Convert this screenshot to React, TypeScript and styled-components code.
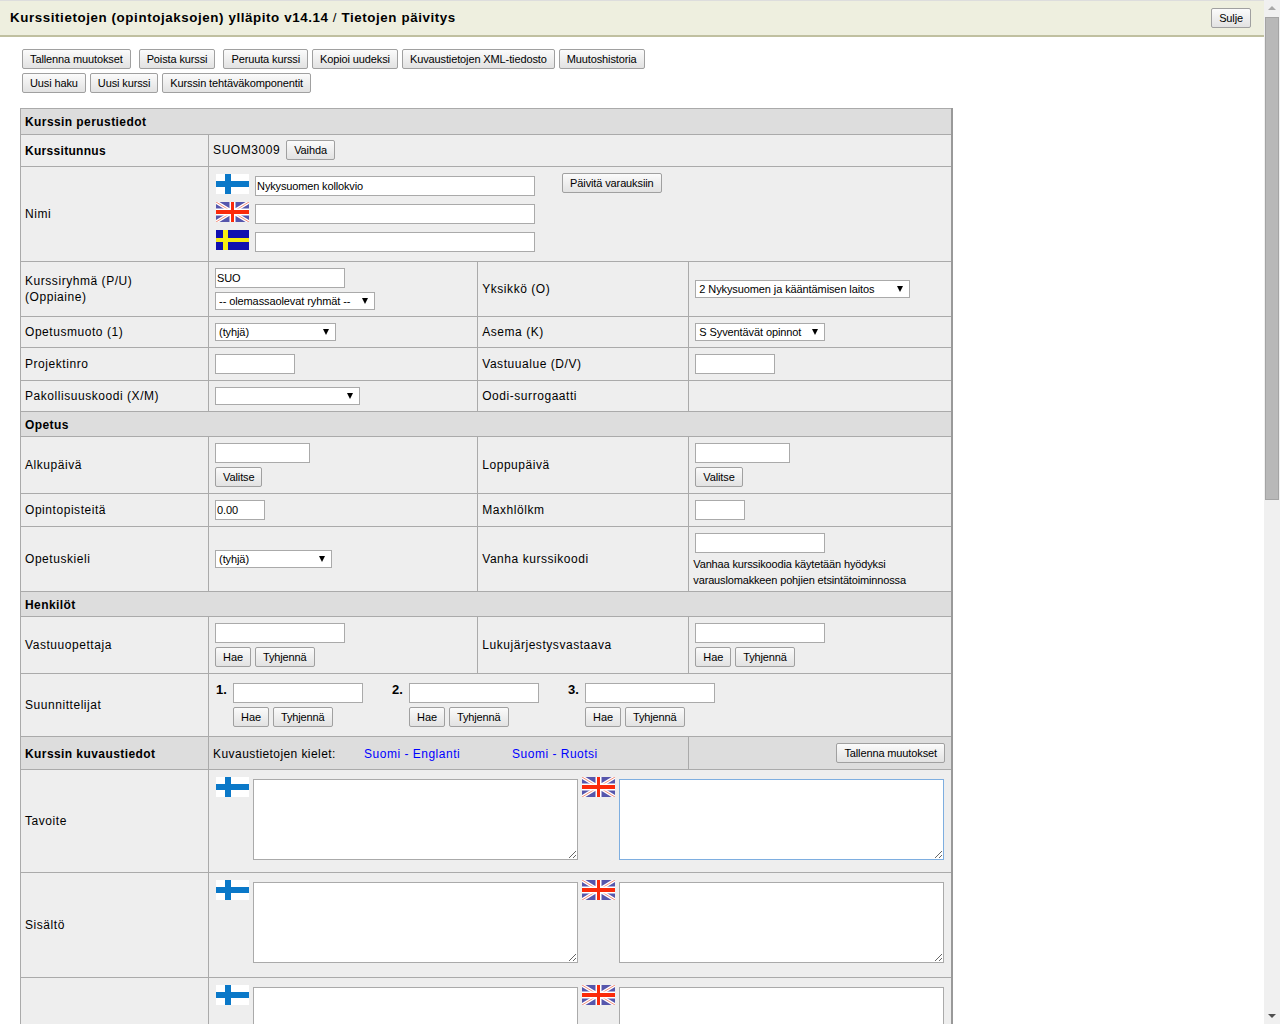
import React from "react";
import styled, { createGlobalStyle } from "styled-components";

const Global = createGlobalStyle`
    html, body {
        margin: 0;
        height: 100%;
        overflow: hidden;
        background: #fff;
    }
    body {
        font-family: "Liberation Sans", Arial, sans-serif;
        font-size: 12px;
        color: #000;
    }
`;

const Page = styled.div`
    display: flex;
    height: 100vh;
    overflow: hidden;
`;
const Main = styled.div`
    flex: 1;
    min-width: 0;
`;
const Header = styled.header`
    display: flex;
    align-items: center;
    justify-content: space-between;
    box-sizing: border-box;
    height: 37px;
    padding: 0 13px 0 10px;
    background: #eeefdf;
    border-top: 1px solid #ddd;
    border-bottom: 2px solid #c0c0a0;
`;
const Title = styled.h1`
    margin: -1px 0 0;
    font-size: 13.33px;
    font-weight: bold;
    letter-spacing: 0.6px;
    span {
        font-weight: normal;
    }
`;
const Toolbar = styled.div`
    display: flex;
    flex-wrap: wrap;
    gap: 4px;
    padding: 12px 0 0 22px;
    margin-bottom: 15px;
    width: 680px;
`;
const Button = styled.button<{ $after?: number; $raise?: number }>`
    box-sizing: border-box;
    height: 20px;
    padding: 0 7px;
    font-family: inherit;
    font-size: 11px;
    letter-spacing: -0.12px;
    color: #000;
    background: linear-gradient(#fbfbfb, #e2e2e2);
    border: 1px solid #a0a0a0;
    border-radius: 2px;
    white-space: nowrap;
    margin-right: ${(p) => p.$after ?? 0}px;
    margin-top: ${(p) => -(p.$raise ?? 0)}px;
`;
const Table = styled.table`
    margin-left: 20px;
    width: 933px;
    table-layout: fixed;
    border-collapse: collapse;
    border-right: 2px solid #999;
`;
const Row = styled.tr<{ $h: number }>`
    height: ${(p) => p.$h}px;
`;
const Section = styled.th`
    padding: 1px 4px 0;
    text-align: left;
    font-size: 12px;
    letter-spacing: 0.42px;
    background: #ddd;
    border: 1px solid #aaa;
`;
const Label = styled.td<{ $bold?: boolean }>`
    padding: 0.5px 4px 0;
    background: #eee;
    border: 1px solid #aaa;
    letter-spacing: ${(p) => (p.$bold ? "0.3px" : "0.55px")};
    line-height: 16px;
    font-weight: ${(p) => (p.$bold ? "bold" : "normal")};
`;
const Field = styled.td<{ $shade?: boolean; $pad?: number; $top?: number }>`
    padding: ${(p) => p.$top ?? 0}px ${(p) => p.$pad ?? 6}px 0;
    background: ${(p) => (p.$shade ? "#ddd" : "#eee")};
    border: 1px solid #aaa;
    vertical-align: ${(p) => (p.$top ? "top" : "middle")};
`;
const Stack = styled.div<{ $gap?: number }>`
    display: flex;
    flex-direction: column;
    align-items: flex-start;
    gap: ${(p) => p.$gap ?? 4}px;
`;
const Inline = styled.div<{ $gap?: number; $raise?: number }>`
    display: flex;
    align-items: center;
    gap: ${(p) => p.$gap ?? 4}px;
    margin-top: ${(p) => -(p.$raise ?? 0)}px;
`;
const Code = styled.span`
    letter-spacing: 0.55px;
    margin-left: -2px;
    margin-right: 2px;
`;
const Input = styled.input<{ $w: number }>`
    box-sizing: border-box;
    display: block;
    width: ${(p) => p.$w}px;
    height: 20px;
    padding: 0 1px;
    font-family: inherit;
    font-size: 11px;
    letter-spacing: -0.15px;
    color: #000;
    background: #fff;
    border: 1px solid #aaa;
    outline: none;
`;
const SelectWrap = styled.div<{ $w: number }>`
    position: relative;
    width: ${(p) => p.$w}px;
    height: 18px;
    &::after {
        content: "";
        position: absolute;
        top: 6px;
        right: 7px;
        border-left: 3px solid transparent;
        border-right: 3px solid transparent;
        border-top: 6px solid #000;
        pointer-events: none;
    }
`;
const Select = styled.select`
    appearance: none;
    box-sizing: border-box;
    display: block;
    width: 100%;
    height: 18px;
    padding: 0 0 0 3px;
    font-family: inherit;
    font-size: 11px;
    letter-spacing: -0.1px;
    color: #000;
    background: #fff;
    border: 1px solid #aaa;
    border-radius: 0;
    outline: none;
`;
const NameGrid = styled.div`
    display: flex;
    align-items: flex-start;
    gap: 27px;
`;
const FlagRow = styled.div`
    display: flex;
    gap: 6px;
    margin-left: 1px;
    padding-bottom: 8px;
    &:last-child {
        padding-bottom: 0;
    }
    svg {
        margin-top: -2px;
    }
`;
const OldCode = styled.div`
    padding-top: 2px;
`;
const Note = styled.div`
    margin: 3px 0 0 -2px;
    font-size: 11px;
    letter-spacing: -0.15px;
    line-height: 16px;
    white-space: nowrap;
`;
const Designers = styled.div`
    display: flex;
`;
const Designer = styled.div`
    display: grid;
    grid-template-columns: 17px auto;
    width: 176px;
    row-gap: 4px;
    margin-left: 1px;
    margin-right: -1px;
`;
const Num = styled.b`
    font-size: 13px;
    line-height: 14px;
`;
const Langs = styled.div`
    display: flex;
    padding-top: 1px;
    letter-spacing: 0.42px;
`;
const LangCaption = styled.span`
    width: 151px;
`;
const LangLink = styled.a<{ $w: number }>`
    width: ${(p) => p.$w}px;
    color: #00f;
    letter-spacing: 0.5px;
    text-decoration: none;
    cursor: pointer;
`;
const RightAlign = styled.div`
    display: flex;
    justify-content: flex-end;
`;
const TextPair = styled.div`
    display: flex;
`;
const TextSide = styled.div`
    display: flex;
    flex: none;
    width: 365px;
    margin-left: 1px;
    svg {
        margin-top: -2px;
        flex: none;
    }
`;
const Area = styled.textarea<{ $active?: boolean }>`
    display: block;
    box-sizing: border-box;
    width: 325px;
    height: 81px;
    margin-left: 4px;
    flex: none;
    padding: 2px;
    font-family: inherit;
    font-size: 11px;
    background: #fff;
    border: 1px solid ${(p) => (p.$active ? "#7eaee0" : "#aaa")};
    outline: none;
`;
const Scrollbar = styled.div`
    flex: none;
    position: relative;
    width: 16px;
    background: #f0f0f0;
`;
const Thumb = styled.div`
    position: absolute;
    top: 17px;
    left: 1px;
    width: 14px;
    height: 483px;
    box-sizing: border-box;
    background: #b8b8b8;
    border: 1px solid #a4a4a4;
`;
const Arrow = styled.div<{ $down?: boolean }>`
    position: absolute;
    left: 4px;
    ${(p) => (p.$down ? "bottom: 6px;" : "top: 6px;")}
    border-left: 4px solid transparent;
    border-right: 4px solid transparent;
    ${(p) => (p.$down ? "border-top" : "border-bottom")}: 4px solid ${(p) => (p.$down ? "#505050" : "#a8a8a8")};
`;

const FlagFi = () => (
    <svg width="33" height="20" viewBox="0 0 33 20">
        <rect width="33" height="20" fill="#fff" />
        <rect x="9" width="6" height="20" fill="#0a78c8" />
        <rect y="7" width="33" height="6" fill="#0a78c8" />
    </svg>
);
const FlagUk = () => (
    <svg width="33" height="20" viewBox="0 0 33 20">
        <rect width="33" height="20" fill="#5656ac" />
        <path d="M0 0L33 20M33 0L0 20" stroke="#fff" strokeWidth="3.5" />
        <path d="M0 0L33 20M33 0L0 20" stroke="#f4907e" strokeWidth="1" />
        <rect x="13.5" width="6" height="20" fill="#fff" />
        <rect y="6.5" width="33" height="7" fill="#fff" />
        <rect x="15" width="3" height="20" fill="#fb2a0a" />
        <rect y="8" width="33" height="4" fill="#fb2a0a" />
    </svg>
);
const FlagSe = () => (
    <svg width="33" height="20" viewBox="0 0 33 20">
        <rect width="33" height="20" fill="#1010b0" />
        <rect x="7" width="5" height="20" fill="#f5ec14" />
        <rect y="8" width="33" height="4" fill="#f5ec14" />
    </svg>
);

const SearchButtons = () => (
    <Inline>
        <Button>Hae</Button>
        <Button>Tyhjennä</Button>
    </Inline>
);

const Dropdown = ({ w, value }: { w: number; value: string }) => (
    <SelectWrap $w={w}>
        <Select defaultValue={value}>
            <option value={value}>{value}</option>
        </Select>
    </SelectWrap>
);

const DescriptionRow = ({ h, label, active }: { h: number; label: string; active?: boolean }) => (
    <Row $h={h}>
        <Label>{label}</Label>
        <Field colSpan={3} $top={9}>
            <TextPair>
                <TextSide>
                    <FlagFi />
                    <Area />
                </TextSide>
                <TextSide>
                    <FlagUk />
                    <Area $active={active} />
                </TextSide>
            </TextPair>
        </Field>
    </Row>
);

export default function App() {
    return (
        <Page>
            <Global />
            <Main>
                <Header>
                    <Title>
                        Kurssitietojen (opintojaksojen) ylläpito v14.14 <span>/</span> Tietojen päivitys
                    </Title>
                    <Button>Sulje</Button>
                </Header>
                <Toolbar>
                    <Button $after={4}>Tallenna muutokset</Button>
                    <Button $after={4}>Poista kurssi</Button>
                    <Button>Peruuta kurssi</Button>
                    <Button>Kopioi uudeksi</Button>
                    <Button>Kuvaustietojen XML-tiedosto</Button>
                    <Button>Muutoshistoria</Button>
                    <Button>Uusi haku</Button>
                    <Button>Uusi kurssi</Button>
                    <Button>Kurssin tehtäväkomponentit</Button>
                </Toolbar>
                <Table>
                    <colgroup>
                        <col style={{ width: 188 }} />
                        <col style={{ width: 269 }} />
                        <col style={{ width: 211 }} />
                        <col style={{ width: 263 }} />
                    </colgroup>
                    <tbody>
                        <Row $h={26}>
                            <Section colSpan={4}>Kurssin perustiedot</Section>
                        </Row>
                        <Row $h={32}>
                            <Label $bold>Kurssitunnus</Label>
                            <Field colSpan={3}>
                                <Inline $raise={1}>
                                    <Code>SUOM3009</Code>
                                    <Button>Vaihda</Button>
                                </Inline>
                            </Field>
                        </Row>
                        <Row $h={95}>
                            <Label>Nimi</Label>
                            <Field colSpan={3}>
                                <NameGrid>
                                    <div>
                                        <FlagRow>
                                            <FlagFi />
                                            <Input $w={280} defaultValue="Nykysuomen kollokvio" />
                                        </FlagRow>
                                        <FlagRow>
                                            <FlagUk />
                                            <Input $w={280} />
                                        </FlagRow>
                                        <FlagRow>
                                            <FlagSe />
                                            <Input $w={280} />
                                        </FlagRow>
                                    </div>
                                    <Button $raise={3}>Päivitä varauksiin</Button>
                                </NameGrid>
                            </Field>
                        </Row>
                        <Row $h={55}>
                            <Label>
                                Kurssiryhmä (P/U)
                                <br />
                                (Oppiaine)
                            </Label>
                            <Field>
                                <Stack>
                                    <Input $w={130} defaultValue="SUO" />
                                    <Dropdown w={160} value="-- olemassaolevat ryhmät --" />
                                </Stack>
                            </Field>
                            <Label>Yksikkö (O)</Label>
                            <Field>
                                <Dropdown w={215} value="2 Nykysuomen ja kääntämisen laitos" />
                            </Field>
                        </Row>
                        <Row $h={31}>
                            <Label>Opetusmuoto (1)</Label>
                            <Field>
                                <Dropdown w={121} value="(tyhjä)" />
                            </Field>
                            <Label>Asema (K)</Label>
                            <Field>
                                <Dropdown w={130} value="S Syventävät opinnot" />
                            </Field>
                        </Row>
                        <Row $h={33}>
                            <Label>Projektinro</Label>
                            <Field>
                                <Input $w={80} />
                            </Field>
                            <Label>Vastuualue (D/V)</Label>
                            <Field>
                                <Input $w={80} />
                            </Field>
                        </Row>
                        <Row $h={31}>
                            <Label>Pakollisuuskoodi (X/M)</Label>
                            <Field>
                                <Dropdown w={145} value="" />
                            </Field>
                            <Label>Oodi-surrogaatti</Label>
                            <Field />
                        </Row>
                        <Row $h={25}>
                            <Section colSpan={4}>Opetus</Section>
                        </Row>
                        <Row $h={57}>
                            <Label>Alkupäivä</Label>
                            <Field>
                                <Stack>
                                    <Input $w={95} />
                                    <Button>Valitse</Button>
                                </Stack>
                            </Field>
                            <Label>Loppupäivä</Label>
                            <Field>
                                <Stack>
                                    <Input $w={95} />
                                    <Button>Valitse</Button>
                                </Stack>
                            </Field>
                        </Row>
                        <Row $h={33}>
                            <Label>Opintopisteitä</Label>
                            <Field>
                                <Input $w={50} defaultValue="0.00" />
                            </Field>
                            <Label>Maxhlölkm</Label>
                            <Field>
                                <Input $w={50} />
                            </Field>
                        </Row>
                        <Row $h={65}>
                            <Label>Opetuskieli</Label>
                            <Field>
                                <Dropdown w={117} value="(tyhjä)" />
                            </Field>
                            <Label>Vanha kurssikoodi</Label>
                            <Field>
                                <OldCode>
                                    <Input $w={130} />
                                    <Note>
                                        Vanhaa kurssikoodia käytetään hyödyksi
                                        <br />
                                        varauslomakkeen pohjien etsintätoiminnossa
                                    </Note>
                                </OldCode>
                            </Field>
                        </Row>
                        <Row $h={25}>
                            <Section colSpan={4}>Henkilöt</Section>
                        </Row>
                        <Row $h={57}>
                            <Label>Vastuuopettaja</Label>
                            <Field>
                                <Stack>
                                    <Input $w={130} />
                                    <SearchButtons />
                                </Stack>
                            </Field>
                            <Label>Lukujärjestysvastaava</Label>
                            <Field>
                                <Stack>
                                    <Input $w={130} />
                                    <SearchButtons />
                                </Stack>
                            </Field>
                        </Row>
                        <Row $h={63}>
                            <Label>Suunnittelijat</Label>
                            <Field colSpan={3}>
                                <Designers>
                                    {[1, 2, 3].map((n) => (
                                        <Designer key={n}>
                                            <Num>{n}.</Num>
                                            <Input $w={130} />
                                            <span />
                                            <SearchButtons />
                                        </Designer>
                                    ))}
                                </Designers>
                            </Field>
                        </Row>
                        <Row $h={33}>
                            <Section>Kurssin kuvaustiedot</Section>
                            <Field colSpan={2} $shade $pad={4}>
                                <Langs>
                                    <LangCaption>Kuvaustietojen kielet:</LangCaption>
                                    <LangLink $w={148}>Suomi - Englanti</LangLink>
                                    <LangLink $w={100}>Suomi - Ruotsi</LangLink>
                                </Langs>
                            </Field>
                            <Field $shade>
                                <RightAlign>
                                    <Button>Tallenna muutokset</Button>
                                </RightAlign>
                            </Field>
                        </Row>
                        <DescriptionRow h={103} label="Tavoite" active />
                        <DescriptionRow h={105} label="Sisältö" />
                        <DescriptionRow h={105} label="" />
                    </tbody>
                </Table>
            </Main>
            <Scrollbar>
                <Arrow />
                <Thumb />
                <Arrow $down />
            </Scrollbar>
        </Page>
    );
}
